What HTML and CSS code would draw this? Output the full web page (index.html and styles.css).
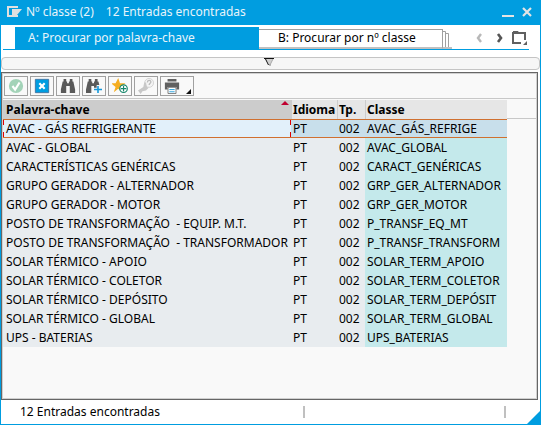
FILE: index.html
```html
<!DOCTYPE html>
<html lang="pt">
<head>
<meta charset="utf-8">
<title>Nº classe (2)</title>
<link rel="stylesheet" href="styles.css">
</head>
<body>
<main class="window">
  <header class="titlebar">
    <svg class="app-icon" width="16" height="12" viewBox="0 0 16 12" aria-hidden="true"><path d="M10 2V1H1v9h9V9" fill="none" stroke="#e0e0e0" stroke-width="2"/><path d="M5 3h10l-5 6H5z" fill="#e0e0e0"/></svg>
    <h1 class="title">Nº classe (2)<span class="title-count">12 Entradas encontradas</span></h1>
    <button class="win-btn" aria-label="Minimizar"><svg width="12" height="12" viewBox="0 0 12 12"><path d="M0 10h12" stroke="#e4e4e4" stroke-width="2"/></svg></button>
    <button class="win-btn" aria-label="Fechar"><svg width="12" height="12" viewBox="0 0 12 12"><path d="M2 2l8 8M10 2l-8 8" stroke="#e4e4e4" stroke-width="2.2"/></svg></button>
  </header>
  <nav class="tabs">
    <button class="tab active">A: Procurar por palavra-chave</button>
    <button class="tab">B: Procurar por nº classe</button>
    <svg class="stack" width="9" height="20" viewBox="0 0 9 20" aria-hidden="true"><path d="M0 2.500h2.500V18M3 4.500h2.500V18" fill="none" stroke="#a0a0a0"/><path d="M0 19h9" stroke="#c0c0c0" stroke-width="2"/></svg>
    <span class="spacer"></span>
    <button class="nav-btn" aria-label="Separador anterior"><svg width="8" height="10" viewBox="0 0 8 10"><path d="M6 1L3 5l3 4" fill="none" stroke="#b8b8b8" stroke-width="2.400"/></svg></button>
    <button class="nav-btn" aria-label="Separador seguinte"><svg width="8" height="10" viewBox="0 0 8 10"><path d="M2 1l3 4-3 4" fill="none" stroke="#555" stroke-width="2.600"/></svg></button>
    <button class="nav-btn" aria-label="Lista de separadores"><svg width="16" height="14" viewBox="0 0 16 14"><path d="M9 12H1V2h12v7" fill="none" stroke="#606060" stroke-width="2"/><path d="M1 0h5l2 3H1zM15 10v4h-4z" fill="#606060"/></svg></button>
  </nav>
  <button class="splitter" aria-label="Expandir restrições"><svg width="10" height="8" viewBox="0 0 10 8"><path d="M1 1l4 6h1l3-6z" fill="#d0d0d0"/><path d="M0 .5h10M1.500 1l3 6M5.500 7h1" fill="none" stroke="#111"/><path d="M9 1L6 7" stroke="#aaa"/></svg></button>
  <section class="panel">
    <div class="toolbar">
      <button class="tool" aria-label="Confirmar"><svg viewBox="0 0 18 18"><circle cx="9" cy="9" r="8" fill="#a3d3b8"/><path d="M5 9l3 4 5-8" fill="none" stroke="#fff" stroke-width="2.400"/></svg></button>
      <button class="tool" aria-label="Cancelar"><svg viewBox="0 0 18 18"><path d="M1.500 1.500h15v15h-15z" fill="#009de0" stroke="#3c70a0"/><path d="M6 6l6 6M12 6l-6 6" stroke="#fff" stroke-width="2.400"/></svg></button>
      <button class="tool" aria-label="Procurar"><svg viewBox="0 0 18 18"><path d="M4 1h3v3h1v2h2V4h1V1h3v3h1l2 9v4h-6V9H7v8H1v-4l2-9h1z" fill="#5a5a5a"/></svg></button>
      <button class="tool" aria-label="Continuar procura"><svg viewBox="0 0 18 18"><path d="M3 1h3v3h1v2h2V4h1V1h3v3h1l1 4h-3v3H9V9H6v8H0v-4l2-9h1z" fill="#5a5a5a"/><path d="M13.500 9v8M9 13h9" stroke="#1698da" stroke-width="1.800"/></svg></button>
      <button class="tool" aria-label="Adicionar aos favoritos"><svg viewBox="0 0 18 18"><path d="M7 0l2 6h6l-5 4 2 6-5-4-5 4 2-6-5-4h5z" fill="#f5ad20"/><circle cx="13" cy="12" r="4.200" fill="#fff" stroke="#16866b" stroke-width="1.300"/><path d="M13 9v6M10 12h6" stroke="#16866b" stroke-width="1.300"/></svg></button>
      <button class="tool" aria-label="Valores pessoais"><svg viewBox="0 0 18 18"><circle cx="12.500" cy="5.500" r="5" fill="#f4f4f4" stroke="#d0d0d0"/><path d="M10.500 5c0-3 4-3 4-.5 0 1.500-2 1.200-2 3.500" fill="none" stroke="#bbb" stroke-width="1.400"/><path d="M0 14l6-4 1-5h2l1 5 2 1-3 3-4 1-2 3z" fill="#c8c8c8"/></svg></button>
      <button class="tool print" aria-label="Imprimir"><svg viewBox="0 0 18 18"><path d="M4 1h10v3H4zM1 5h16v8h-3v-3H4v3H1z" fill="#606060"/><path d="M4.500 10.500h9v7h-9z" fill="#fff" stroke="#707070"/><path d="M6 13h6M6 15.500h6" stroke="#1698da"/></svg><svg class="more" viewBox="0 0 5 5"><path d="M5 0v5H0z" fill="#111"/></svg></button>
    </div>
    <div class="grid-area">
    <table class="grid">
      <colgroup><col class="c1"><col class="c2"><col class="c3"><col class="c4"></colgroup>
      <thead><tr><th class="sorted">Palavra-chave</th><th>Idioma</th><th>Tp.</th><th>Classe</th></tr></thead>
      <tbody>
        <tr class="selected"><td>AVAC - GÁS REFRIGERANTE</td><td>PT</td><td>002</td><td>AVAC_GÁS_REFRIGE</td></tr>
        <tr><td>AVAC - GLOBAL</td><td>PT</td><td>002</td><td>AVAC_GLOBAL</td></tr>
        <tr><td>CARACTERÍSTICAS GENÉRICAS</td><td>PT</td><td>002</td><td>CARACT_GENÉRICAS</td></tr>
        <tr><td>GRUPO GERADOR - ALTERNADOR</td><td>PT</td><td>002</td><td>GRP_GER_ALTERNADOR</td></tr>
        <tr><td>GRUPO GERADOR - MOTOR</td><td>PT</td><td>002</td><td>GRP_GER_MOTOR</td></tr>
        <tr><td>POSTO DE TRANSFORMAÇÃO &nbsp;- EQUIP. M.T.</td><td>PT</td><td>002</td><td>P_TRANSF_EQ_MT</td></tr>
        <tr><td>POSTO DE TRANSFORMAÇÃO &nbsp;- TRANSFORMADOR</td><td>PT</td><td>002</td><td>P_TRANSF_TRANSFORM</td></tr>
        <tr><td>SOLAR TÉRMICO - APOIO</td><td>PT</td><td>002</td><td>SOLAR_TERM_APOIO</td></tr>
        <tr><td>SOLAR TÉRMICO - COLETOR</td><td>PT</td><td>002</td><td>SOLAR_TERM_COLETOR</td></tr>
        <tr><td>SOLAR TÉRMICO - DEPÓSITO</td><td>PT</td><td>002</td><td>SOLAR_TERM_DEPÓSIT</td></tr>
        <tr><td>SOLAR TÉRMICO - GLOBAL</td><td>PT</td><td>002</td><td>SOLAR_TERM_GLOBAL</td></tr>
        <tr><td>UPS - BATERIAS</td><td>PT</td><td>002</td><td>UPS_BATERIAS</td></tr>
      </tbody>
    </table>
    </div>
  </section>
  <footer class="status">
    <span class="message">12 Entradas encontradas</span>
    <span class="mark"></span>
    <span class="mark"></span>
    <svg class="grip" width="13" height="13" viewBox="0 0 13 13" aria-hidden="true"><path d="M13 0v13H0z" fill="#009de0"/></svg>
  </footer>
</main>
</body>
</html>
```

FILE: styles.css
```css
* { box-sizing: border-box; }
body {
  margin: 0;
  font: 12px/18px "Noto Sans", sans-serif;
  color: #000;
}
button {
  padding: 0;
  border: 0;
  background: none;
  font: inherit;
  color: inherit;
}
svg { display: block; }

.window {
  display: flex;
  flex-direction: column;
  min-height: 100vh;
  border: 1px solid #009de0;
  background: #fff;
}

.titlebar {
  display: flex;
  align-items: center;
  height: 24px;
  padding: 0 7px 2px 6px;
  background: #009de0;
  color: #e8f4fa;
}
.title {
  flex: 1;
  margin: 0 0 0 3px;
  font-size: 12px;
  font-weight: 400;
}
.title-count { margin-left: 12px; }
.win-btn + .win-btn { margin-left: 7px; }

.tabs {
  display: flex;
  align-items: flex-end;
  height: 25px;
  margin: 0 11px 0 2px;
  padding-left: 12px;
  border-bottom: 1px solid #009de0;
}
.tab {
  height: 20px;
  flex: 0 0 184px;
  padding: 0 0 2px 19px;
  border: 1px solid #a0a0a0;
  border-width: 1px 1px 2px 0;
  border-bottom-color: #c0c0c0;
  line-height: 15px;
  text-align: left;
}
.tab.active {
  flex-basis: 244px;
  height: 22px;
  padding: 0 0 1px 13px;
  border: 0;
  background: #009de0;
  color: #e8f4fa;
}
.spacer { flex: 1; }
.nav-btn { margin: 0 0 6px 13px; }
.nav-btn:last-child { margin: 0 1px 4px 8px; }

.splitter {
  display: flex;
  justify-content: center;
  height: 13px;
  margin-top: 7px;
  padding-right: 4px;
  border: 1px solid #c4c4c4;
  border-radius: 4px;
  background: #f6f6f6;
}

.panel {
  flex: 1;
  display: flex;
  flex-direction: column;
  margin: 2px 2px 0 0;
  padding: 0 1px 1px;
  border: 1px solid #666;
  background: #f9f9f9;
  box-shadow: inset 0 0 0 1px #d0d0d0;
}
.toolbar {
  display: flex;
  gap: 2px;
  padding: 3px 0 2px 1px;
  border-bottom: 1px solid #c8c8c8;
}
.tool {
  display: flex;
  align-items: center;
  justify-content: center;
  width: 24px;
  height: 20px;
  border: 1px solid #a0a0a0;
}
.tool svg { width: 16px; height: 16px; }
.tool.print { width: 34px; gap: 6px; }
.tool .more { width: 5px; height: 5px; margin-top: 10px; }

.grid-area {
  flex: 1;
  padding-top: 1px;
  background: linear-gradient(#c8c8c8, #c8c8c8) 0 19px / 100% 1px no-repeat;
}
.grid {
  table-layout: fixed;
  width: 504px;
  border-collapse: separate;
  border-spacing: 0;
}
.c1 { width: 288px; }
.c2 { width: 46px; }
.c3 { width: 28px; }
.c4 { width: 142px; }
.grid th, .grid td {
  height: 19px;
  padding: 0 0 0 2px;
  line-height: 18px;
  text-align: left;
  white-space: nowrap;
  background: #e8ecef;
}
.grid th {
  border-left: 1px solid #ccc;
  background: #e6e6e6;
  padding-left: 1px;
}
.grid th:first-child, .grid td:first-child { padding-left: 3px; }
.grid th.sorted {
  position: relative;
  border-left: 0;
  background: #ccc;
}
.sorted::after {
  content: "";
  position: absolute;
  top: 1px;
  right: 2px;
  border: solid transparent;
  border-width: 0 4px 4px;
  border-bottom-color: #c00030;
}
.grid td:last-child { background: #c4e9eb; }
.grid .selected td {
  border: 1px solid #d07030;
  border-width: 1px 0;
  line-height: 17px;
  background: #c8dfeb;
}
.grid .selected td:first-child {
  background:
    linear-gradient(#e00000 5px, transparent 5px 12px, #e00000 12px) left / 1px 100% no-repeat,
    linear-gradient(#e00000 5px, transparent 5px 12px, #e00000 12px) right / 1px 100% no-repeat,
    #e2f0fa;
}

.status {
  display: flex;
  align-items: center;
  height: 24px;
  padding-left: 19px;
  position: relative;
}
.message { flex: 0 0 283px; }
.mark {
  width: 2px;
  height: 12px;
  background: #c0c0c0;
}
.mark + .mark { margin-left: auto; margin-right: 34px; }
.grip {
  position: absolute;
  right: 0;
  bottom: 0;
}
```
